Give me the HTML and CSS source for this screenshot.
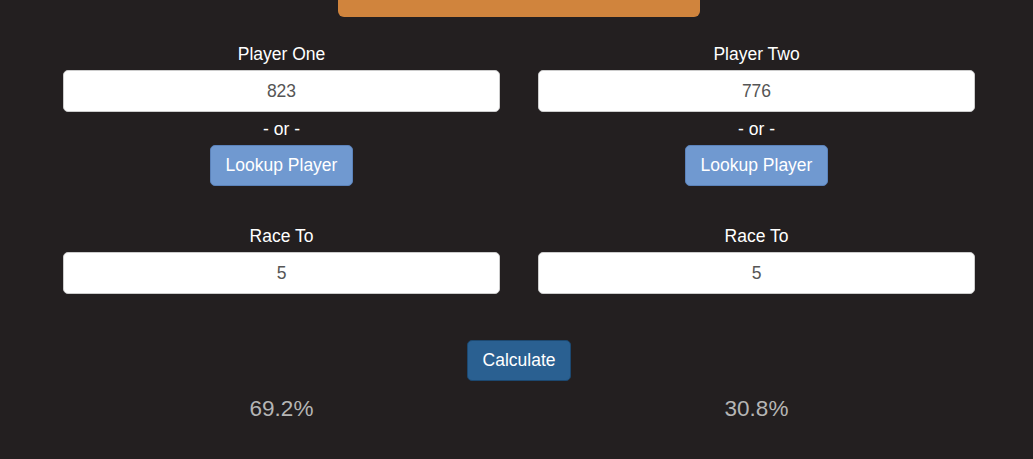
FILE: index.html
```html
<!DOCTYPE html>
<html lang="en">

<head>
  <meta charset="UTF-8" />
  <meta name="viewport" content="width=device-width, initial-scale=1.0" />
  <title>Race Calculator</title>
  <link rel="stylesheet" href="styles.css">
</head>

<body>
  <div class="wrap">
    <div class="banner"></div>

    <div class="row">
      <div class="col">
        <label class="label" for="p1">Player One</label>
        <input class="field" id="p1" type="text" value="823" />
        <div class="or">- or -</div>
        <button class="btn btn-lookup">Lookup Player</button>
      </div>
      <div class="col">
        <label class="label" for="p2">Player Two</label>
        <input class="field" id="p2" type="text" value="776" />
        <div class="or">- or -</div>
        <button class="btn btn-lookup">Lookup Player</button>
      </div>
    </div>

    <div class="row race">
      <div class="col">
        <label class="label" for="r1">Race To</label>
        <input class="field" id="r1" type="text" value="5" />
      </div>
      <div class="col">
        <label class="label" for="r2">Race To</label>
        <input class="field" id="r2" type="text" value="5" />
      </div>
    </div>

    <div class="calc">
      <button class="btn btn-calc">Calculate</button>
    </div>

    <div class="row result">
      <div class="col"><h4>69.2%</h4></div>
      <div class="col"><h4>30.8%</h4></div>
    </div>
  </div>
</body>

</html>
```

FILE: styles.css
```css
* {
  margin: 0;
  padding: 0;
  box-sizing: border-box;
}

body {
  background: #231f20;
  color: #fff;
  font-family: "Liberation Sans", Arial, sans-serif;
  font-size: 17.5px;
  line-height: 25px;
}

.wrap {
  width: 912px;
  margin-left: 63px;
}

.banner {
  width: 362px;
  height: 17px;
  margin: 0 auto;
  background: #d0843d;
  border-radius: 0 0 6px 6px;
}

.row {
  display: grid;
  grid-template-columns: 1fr 1fr;
  column-gap: 38px;
}

.col {
  display: flex;
  flex-direction: column;
  align-items: center;
}

.label {
  display: block;
  margin-top: 25px;
  margin-bottom: 3px;
}

.race .label {
  margin-top: 38px;
}

.field {
  width: 100%;
  height: 42px;
  border: 1px solid #ccc;
  border-radius: 5px;
  background: #fff;
  color: #555;
  font-family: inherit;
  font-size: 17.5px;
  text-align: center;
  outline: none;
}

.or {
  margin: 5px 0 3px;
}

.btn {
  height: 41px;
  padding: 0 15px;
  border-radius: 5px;
  color: #fff;
  font-family: inherit;
  font-size: 17.5px;
  cursor: pointer;
}

.btn-lookup {
  background: #7099d0;
  border: 1px solid #5b82ba;
}

.calc {
  display: flex;
  justify-content: center;
  margin-top: 46px;
}

.btn-calc {
  width: 104px;
  padding: 0;
  background: #2a6091;
  border: 1px solid #1c4870;
}

.result {
  margin-top: 15px;
}

.result h4 {
  font-size: 22.5px;
  font-weight: normal;
  line-height: 25px;
  color: #b5b5b5;
}
```
